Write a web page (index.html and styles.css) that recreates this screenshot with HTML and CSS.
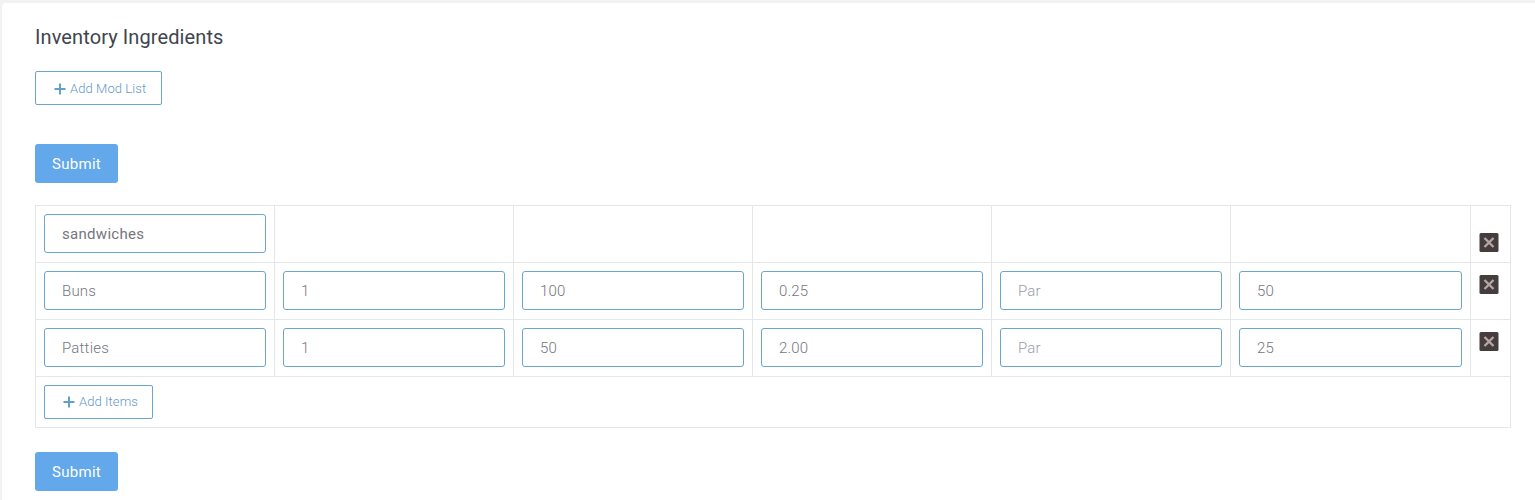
FILE: index.html
```html
<!DOCTYPE html>
<html lang="en">
<head>
<meta charset="utf-8">
<title>Inventory Ingredients</title>
<link rel="stylesheet" href="styles.css">
</head>
<body>
<svg class="defs" aria-hidden="true">
  <symbol id="plus" viewBox="0 0 12 12"><path d="M6 .5v11M.5 6h11" fill="none" stroke="currentColor" stroke-width="2"/></symbol>
  <symbol id="close" viewBox="0 0 20 19"><rect x=".5" width="19" height="19" rx="1.5" fill="#453c3d"/><path d="M5.5 5l9 9M14.5 5l-9 9" fill="none" stroke="#b5a5a5" stroke-width="2.4"/></symbol>
</svg>
<main class="card">
  <h1 class="title">Inventory Ingredients</h1>
  <button class="outline mod"><svg class="plus"><use href="#plus"/></svg><span>Add Mod List</span></button>
  <button class="submit">Submit</button>
  <div class="table">
    <div class="cell"><input class="field name" value="sandwiches"></div>
    <div class="cell"></div><div class="cell"></div><div class="cell"></div><div class="cell"></div><div class="cell"></div>
    <div class="cell action low"><svg class="close"><use href="#close"/></svg></div>

    <div class="cell"><input class="field" value="Buns"></div>
    <div class="cell"><input class="field" value="1"></div>
    <div class="cell"><input class="field" value="100"></div>
    <div class="cell"><input class="field" value="0.25"></div>
    <div class="cell"><input class="field" placeholder="Par"></div>
    <div class="cell"><input class="field" value="50"></div>
    <div class="cell action"><svg class="close"><use href="#close"/></svg></div>

    <div class="cell"><input class="field" value="Patties"></div>
    <div class="cell"><input class="field" value="1"></div>
    <div class="cell"><input class="field" value="50"></div>
    <div class="cell"><input class="field" value="2.00"></div>
    <div class="cell"><input class="field" placeholder="Par"></div>
    <div class="cell"><input class="field" value="25"></div>
    <div class="cell action"><svg class="close"><use href="#close"/></svg></div>

    <div class="cell wide"><button class="outline items"><svg class="plus"><use href="#plus"/></svg><span>Add Items</span></button></div>
  </div>
  <button class="submit">Submit</button>
</main>
</body>
</html>
```
FILE: styles.css
```css
* { box-sizing: border-box; }
body {
  margin: 0;
  height: 500px;
  overflow: hidden;
  padding: 3px 0 0 2px;
  background: #f2f2f2;
  font-family: Roboto, "Liberation Sans", sans-serif;
}
.defs { display: none; }
.card {
  height: 520px;
  padding: 22px 24px 0 33px;
  background: #fff;
  border-top-left-radius: 4px;
  display: flex;
  flex-direction: column;
  align-items: flex-start;
}
.title {
  margin: 0 0 22px;
  font-size: 20px;
  line-height: 24px;
  font-weight: 400;
  letter-spacing: .1px;
  color: #40454d;
}
.outline {
  display: flex;
  align-items: center;
  gap: 4px;
  height: 34px;
  padding: 0 0 0 18px;
  border: 1px solid #6ba5cd;
  border-radius: 2px;
  background: #fff;
  color: #6597c8;
  font: 300 13px/18px Roboto, sans-serif;
  letter-spacing: .08px;
}
.mod { width: 127px; margin-bottom: 39px; padding-top: 1px; }
.items { width: 109px; }
.plus { width: 12px; height: 12px; color: #629fcd; }
.submit {
  width: 83px;
  height: 39px;
  padding: 0;
  border: 0;
  border-radius: 3px;
  background: #62a8ea;
  color: #fff;
  font: 400 15px/20px Roboto, sans-serif;
  letter-spacing: .3px;
}
.table {
  width: 1476px;
  margin: 22px 0 24px;
  display: grid;
  grid-template-columns: repeat(5, 239px) 240px 40px;
  grid-template-rows: repeat(3, 57px) 51px;
  border: solid #e4e7ea;
  border-width: 1px 0 0 1px;
}
.cell {
  padding: 8px;
  border: solid #e4e7ea;
  border-width: 0 1px 1px 0;
}
.wide { grid-column: 1 / -1; }
.field {
  display: block;
  width: 100%;
  height: 39px;
  padding: 0 17px;
  border: 1px solid #6ba5cd;
  border-radius: 3px;
  background: #fff;
  color: #75767e;
  font: 300 15px/20px Roboto, sans-serif;
  letter-spacing: .2px;
}
.name { font-weight: 400; letter-spacing: .3px; }
.field::placeholder { color: #9a9da6; opacity: 1; }
.action { padding: 12px 0 0 8px; }
.low { padding-top: 27px; }
.close { display: block; width: 20px; height: 19px; }
```
